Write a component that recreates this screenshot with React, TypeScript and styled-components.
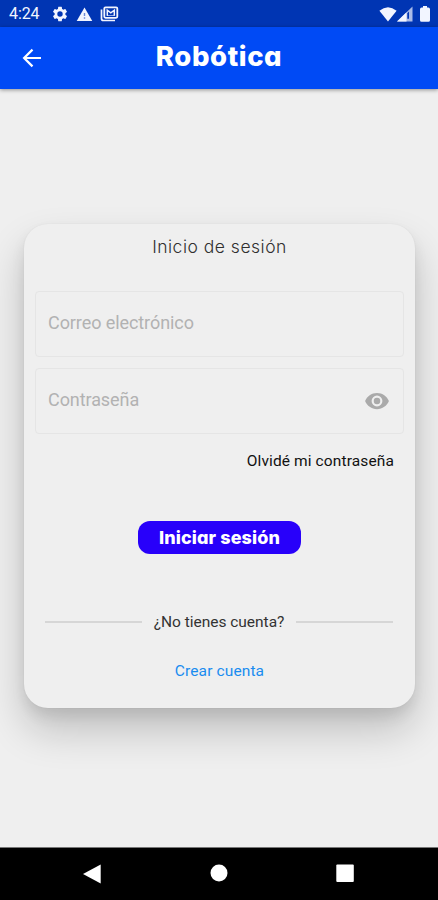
import React from "react";
import styled, { createGlobalStyle } from "styled-components";

const GlobalStyle = createGlobalStyle`
  *, *::before, *::after { box-sizing: border-box; }
  body { margin: 0; background: #efefef; }
  button, input { font: inherit; border: 0; padding: 0; background: none; }
`;

const Screen = styled.div`
  width: 438px;
  height: 900px;
  display: flex;
  flex-direction: column;
  overflow: hidden;
  background: #efefef;
  font-family: Roboto, "Liberation Sans", sans-serif;
`;

const StatusBar = styled.div`
  height: 27px;
  flex: none;
  display: flex;
  align-items: center;
  justify-content: space-between;
  padding: 1px 8px 0 9px;
  background: #0035b3;
  color: #f2f5ff;
`;

const StatusGroup = styled.div<{ $gap: number }>`
  display: flex;
  align-items: center;
  gap: ${(p) => p.$gap}px;
  svg { display: block; }
`;

const Clock = styled.span`
  width: 35px;
  font-size: 16px;
  line-height: 20px;
  letter-spacing: -0.1px;
`;

const AppBar = styled.header`
  height: 62px;
  flex: none;
  display: grid;
  grid-template-columns: 64px 1fr 64px;
  background: #004af5;
  color: #fff;
  box-shadow: 0 1px 4px rgba(0, 0, 0, 0.4);
`;

const BackButton = styled.button`
  height: 62px;
  padding: 0 0 0 22px;
  color: inherit;
  text-align: left;
  svg { display: block; }
`;

const Title = styled.h1`
  margin: 0;
  padding-top: 12px;
  text-align: center;
  font: 800 27.5px/34px Inter, sans-serif;
  font-feature-settings: "cv11";
  letter-spacing: 0.6px;
`;

const Main = styled.main`
  flex: 1;
  padding: 135px 23px 0 23.5px;
`;

const Card = styled.form`
  height: 484px;
  display: flex;
  flex-direction: column;
  padding: 11px 11px 0 11.5px;
  border-radius: 24px;
  background: #efefef;
  box-shadow: 0 0 2px rgba(0, 0, 0, 0.06), 0 22px 40px rgba(0, 0, 0, 0.2),
    0 8px 14px rgba(0, 0, 0, 0.08);
`;

const CardTitle = styled.h2`
  margin: 0 0 32px;
  text-align: center;
  color: #303030;
  font: 300 17.5px/24px Inter, sans-serif;
  font-feature-settings: "cv11";
  letter-spacing: 0.5px;
`;

const Field = styled.label`
  height: 66px;
  display: flex;
  align-items: center;
  justify-content: space-between;
  margin-bottom: 11px;
  padding: 0 13px 0 12px;
  border: 1px solid #e5e5e5;
  border-radius: 4px;
  color: #aaa;
`;

const FieldInput = styled.input`
  flex: 1;
  min-width: 0;
  height: 30px;
  margin-bottom: 3px;
  outline: none;
  font-size: 18px;
  letter-spacing: -0.08px;
  color: #333;
  &::placeholder { color: #b2b2b2; opacity: 1; }
`;

const ForgotLink = styled.button`
  align-self: flex-end;
  height: 20px;
  margin: 6px 10px 0 0;
  color: #111;
  font-size: 15.5px;
  line-height: 20px;
  letter-spacing: 0.12px;
`;

const SubmitButton = styled.button`
  width: 163px;
  height: 33px;
  align-self: center;
  margin: 50px 0 0;
  border-radius: 12px;
  background: #2800fa;
  color: #fff;
  font: 800 18px/24px Inter, sans-serif;
  font-feature-settings: "cv11";
  letter-spacing: 0.1px;
`;

const Divider = styled.div`
  display: flex;
  align-items: center;
  gap: 11.5px;
  margin-top: 58px;
  padding: 0 11px 0 10px;
  color: #333;
  font-size: 15.5px;
  line-height: 20px;
  letter-spacing: -0.02px;
  &::before, &::after {
    content: "";
    flex: 1;
    height: 2px;
    background: #d6d6d6;
  }
`;

const CreateLink = styled.button`
  align-self: center;
  margin-top: 29px;
  color: #198cf0;
  font-size: 15.5px;
  line-height: 20px;
  letter-spacing: 0.12px;
`;

const NavBar = styled.nav`
  height: 53px;
  flex: none;
  display: flex;
  justify-content: space-between;
  padding: 16px 83px 0 82px;
  border-top: 1px solid #777;
  background: #000;
`;

const GearIcon = () => (
  <svg width="18" height="18" viewBox="0 0 24 24" fill="currentColor">
    <path d="M19.14 12.94c.04-.3.06-.61.06-.94s-.02-.64-.07-.94l2.03-1.58a.49.49 0 0 0 .12-.61l-1.92-3.32a.49.49 0 0 0-.59-.22l-2.39.96a7 7 0 0 0-1.62-.94l-.36-2.54a.48.48 0 0 0-.48-.41h-3.84a.47.47 0 0 0-.47.41l-.36 2.54a7.4 7.4 0 0 0-1.62.94l-2.39-.96a.48.48 0 0 0-.59.22L2.74 8.87a.48.48 0 0 0 .12.61l2.03 1.58a5.7 5.7 0 0 0 0 1.88l-2.03 1.58a.49.49 0 0 0-.12.61l1.92 3.32c.12.22.37.29.59.22l2.39-.96c.5.38 1.03.7 1.62.94l.36 2.54c.05.24.24.41.48.41h3.84c.24 0 .44-.17.47-.41l.36-2.54a7 7 0 0 0 1.62-.94l2.39.96c.22.08.47 0 .59-.22l1.92-3.32a.47.47 0 0 0-.12-.61zM12 15.6a3.6 3.6 0 1 1 0-7.2 3.6 3.6 0 0 1 0 7.2z" />
  </svg>
);

const WarningIcon = () => (
  <svg width="17" height="17" viewBox="0 0 24 24">
    <path fill="currentColor" d="M1 21h22L12 2z" />
    <path fill="#6b88d6" d="M11 10h2v4h-2zM11 16h2v2h-2z" />
  </svg>
);

const MailStackIcon = () => (
  <svg width="19" height="16" viewBox="0 0 19 16" fill="none" stroke="currentColor">
    <path d="M1.5 3.5v9q0 2 2 2H15" strokeWidth="1.7" />
    <rect x="4.3" y="1.3" width="13" height="10.5" rx="1.2" strokeWidth="1.8" />
    <path d="M7.3 9.7V4.2l3.5 2.6 3.5-2.6v5.5" strokeWidth="1.5" />
    <path d="M7 9.5h7.5" strokeOpacity="0.6" />
  </svg>
);

const WifiIcon = () => (
  <svg width="18" height="15" viewBox="0 0 18 15" fill="currentColor">
    <path d="M.4 3.8Q9-3.2 17.6 3.8L9 14.6z" />
  </svg>
);

const SignalIcon = () => (
  <svg width="16" height="16" viewBox="0 0 16 16">
    <path fill="currentColor" fillOpacity="0.7" d="M0 15.5 15.5.5v15z" />
    <path fill="currentColor" d="M0 15.5 9.5 6.3v9.2z" />
    <path fill="#0035b3" d="M10.3 7.2 12 5.6v7.2h-1.7z" />
  </svg>
);

const BatteryIcon = () => (
  <svg width="10" height="16" viewBox="0 0 10 16" fill="currentColor">
    <path d="M3 0h4v1.5h1.3Q10 1.8 10 3.2v11q0 1.6-1.6 1.6H1.6Q0 15.8 0 14.2v-11q0-1.4 1.7-1.7H3z" />
  </svg>
);

const ArrowIcon = () => (
  <svg width="20" height="20" viewBox="0 0 20 20" fill="none" stroke="currentColor" strokeWidth="2.2">
    <path d="M19 10H3M10.5 1.6 2.1 10l8.4 8.4" />
  </svg>
);

const EyeIcon = () => (
  <svg width="26" height="26" viewBox="0 0 24 24" fill="currentColor">
    <path d="M12 4.5C7 4.5 2.73 7.61 1 12c1.73 4.39 6 7.5 11 7.5s9.27-3.11 11-7.5c-1.73-4.39-6-7.5-11-7.5zM12 17a5 5 0 1 1 0-10 5 5 0 0 1 0 10zm0-8a3 3 0 1 0 0 6 3 3 0 0 0 0-6z" />
  </svg>
);

export default function App() {
  return (
    <>
      <GlobalStyle />
      <Screen>
        <StatusBar>
          <StatusGroup $gap={7}>
            <Clock>4:24</Clock>
            <GearIcon />
            <WarningIcon />
            <MailStackIcon />
          </StatusGroup>
          <StatusGroup $gap={7}>
            <StatusGroup $gap={0}>
              <WifiIcon />
              <SignalIcon />
            </StatusGroup>
            <BatteryIcon />
          </StatusGroup>
        </StatusBar>
        <AppBar>
          <BackButton aria-label="Volver">
            <ArrowIcon />
          </BackButton>
          <Title>Robótica</Title>
        </AppBar>
        <Main>
          <Card onSubmit={(e) => e.preventDefault()}>
            <CardTitle>Inicio de sesión</CardTitle>
            <Field>
              <FieldInput type="email" placeholder="Correo electrónico" />
            </Field>
            <Field>
              <FieldInput type="password" placeholder="Contraseña" />
              <EyeIcon />
            </Field>
            <ForgotLink type="button">Olvidé mi contraseña</ForgotLink>
            <SubmitButton type="submit">Iniciar sesión</SubmitButton>
            <Divider>¿No tienes cuenta?</Divider>
            <CreateLink type="button">Crear cuenta</CreateLink>
          </Card>
        </Main>
        <NavBar>
          <svg width="20" height="20" viewBox="0 0 20 20">
            <path fill="#fff" d="M1 10 18.7.5v19z" />
          </svg>
          <svg width="18" height="18" viewBox="0 0 18 18">
            <circle cx="9" cy="9" r="8.5" fill="#fff" />
          </svg>
          <svg width="20" height="20" viewBox="0 0 20 20">
            <rect x="1.3" y=".5" width="17.5" height="17.5" rx="1" fill="#fff" />
          </svg>
        </NavBar>
      </Screen>
    </>
  );
}
